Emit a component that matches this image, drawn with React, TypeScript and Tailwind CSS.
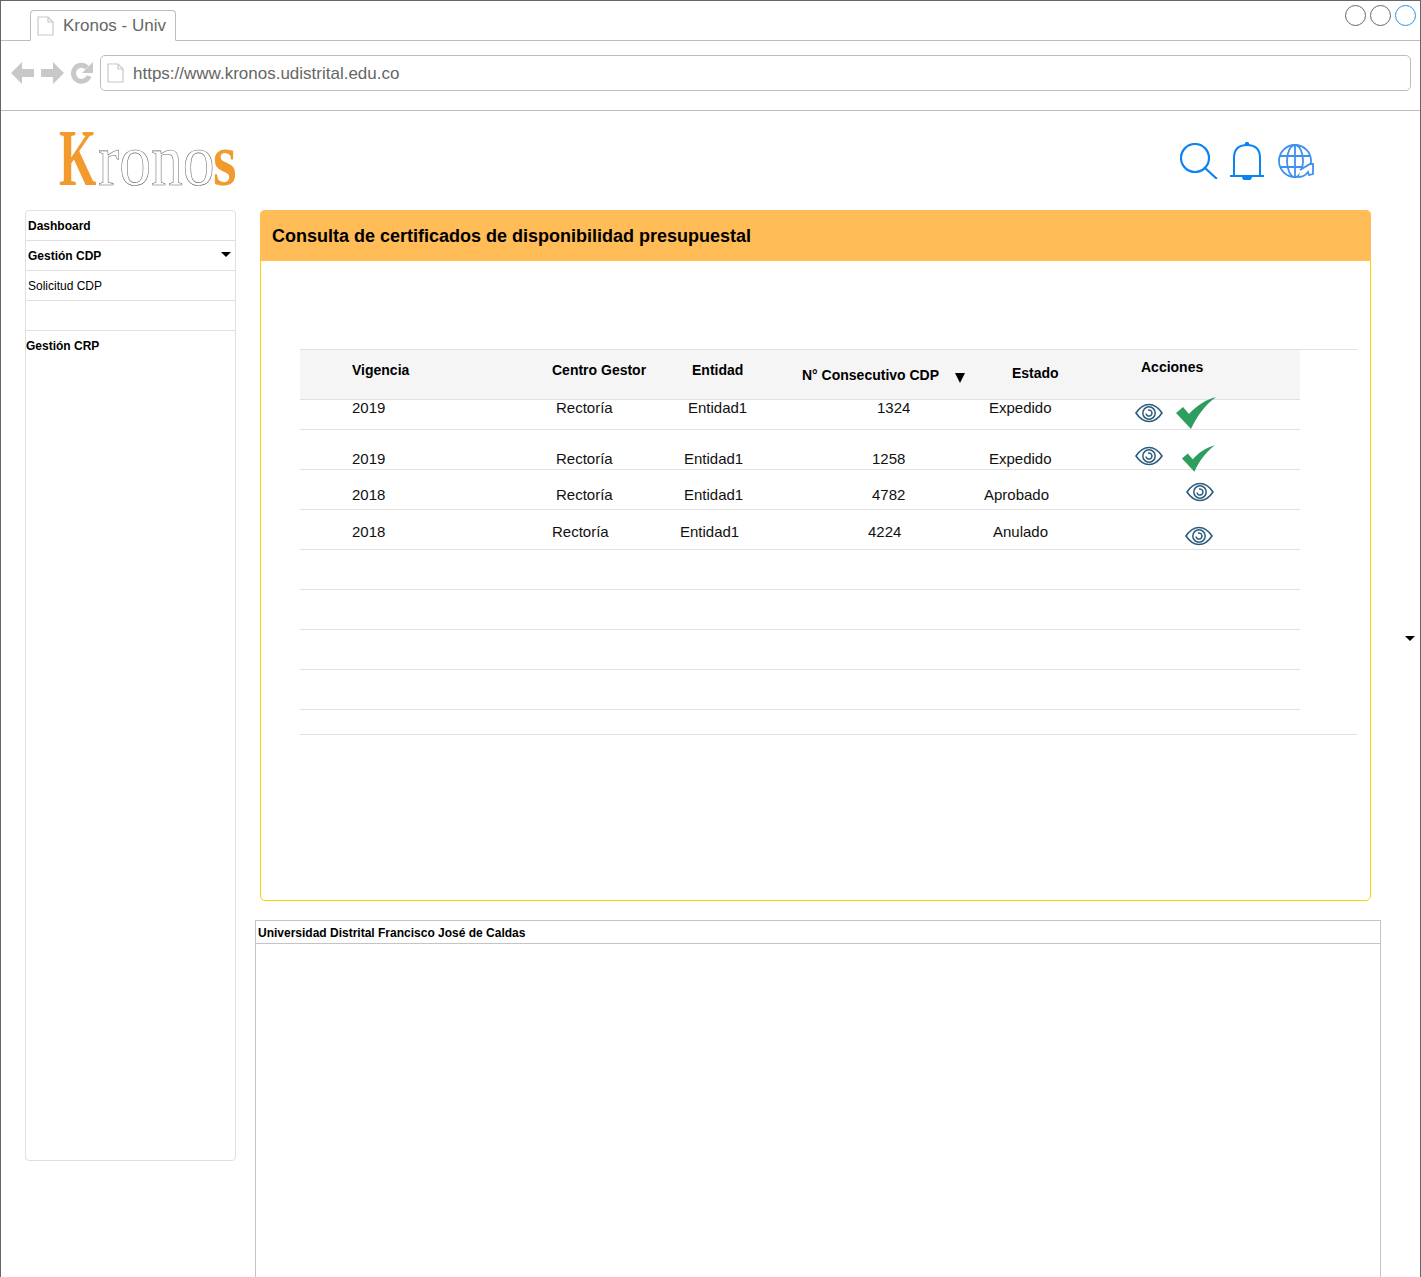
import type { ReactNode } from 'react'

const sans = "font-['Liberation_Sans',Arial,sans-serif]"

function PageIcon({ className }: { className: string }) {
  return (
    <svg viewBox="0 0 17 20" className={className} fill="#fff" stroke="#c8c8c8" strokeWidth="1.2">
      <path d="M1 1h10l5 5v13H1z" />
      <path d="M11 1v5h5" fill="none" />
    </svg>
  )
}

function Eye({ className }: { className: string }) {
  return (
    <svg viewBox="0 0 28 20" className={className} fill="none" stroke="#2b5b7e">
      <path d="M1 10C5 4 9 1.500 14 1.500S23 4 27 10c-4 6-8 8.500-13 8.500S5 16 1 10z" strokeWidth="1.600" />
      <circle cx="14" cy="10" r="6.200" strokeWidth="1.500" />
      <path d="M11 10.500a3 3 0 1 0 2-3.300" strokeWidth="1.500" />
    </svg>
  )
}

function Check({ className }: { className: string }) {
  return (
    <svg viewBox="0 0 40 32" className={className} fill="#2e9e5f">
      <path d="M0 16l7-6 6 7C20 9 29 3 40 0 29 8 21 19 15 32z" />
    </svg>
  )
}

function Caret({ className }: { className: string }) {
  return <div className={`h-0 w-0 border-x-[5px] border-t-[5px] border-x-transparent border-t-black ${className}`} />
}

function Row({ className, children }: { className: string; children: ReactNode }) {
  return <div className={`flex w-[1000px] items-start border-b border-[#e0e0e0] text-[15px] leading-5 text-[#111] ${className}`}>{children}</div>
}

function Cell({ className, children }: { className: string; children: ReactNode }) {
  return <span className={`shrink-0 ${className}`}>{children}</span>
}

function BrowserChrome() {
  return (
    <>
      <div className="flex h-10 items-end justify-between border-b border-[#bdbdbd] pl-[29px] pr-1">
        <div className="-mb-px flex h-[31px] w-[146px] items-center rounded-t-[4px] border border-b-white border-[#bdbdbd] bg-white pl-[6px]">
          <PageIcon className="h-[20px] w-[17px]" />
          <span className="ml-[9px] text-[17px] text-[#666]">Kronos - Univ</span>
        </div>
        <div className="mb-[14px] flex gap-[4px]">
          <div className="h-[21px] w-[21px] rounded-full border border-[#666]" />
          <div className="h-[21px] w-[21px] rounded-full border border-[#666]" />
          <div className="h-[21px] w-[21px] rounded-full border border-[#2196f3]" />
        </div>
      </div>
      <div className="flex h-[70px] items-center border-b border-[#bdbdbd] pb-[6px] pl-[10px] pr-[9px]">
        <svg viewBox="0 0 84 24" className="h-6 w-[84px] shrink-0" fill="#c8c8c8">
          <path d="M0 12L11 1v7h12v8H11v7z" />
          <path d="M53 12L42 1v7H30v8h12v7z" />
          <path d="M76 6.500A8 8 0 1 0 78 15" fill="none" stroke="#c8c8c8" strokeWidth="5" />
          <path d="M82 1v11H71z" />
        </svg>
        <div className="ml-[5px] flex h-[36px] flex-1 items-center rounded-[5px] border border-[#bdbdbd] pl-[6px]">
          <PageIcon className="h-[20px] w-[17px]" />
          <span className="ml-[9px] pt-[2px] text-[17px] text-[#666]">https://www.kronos.udistrital.edu.co</span>
        </div>
      </div>
    </>
  )
}

function TopBar() {
  return (
    <div className="flex h-[99px] items-start">
      <div className="ml-[58px] mt-[5px] flex w-[177px] shrink-0 items-baseline font-['Liberation_Serif',serif] leading-[84px]">
        <span className="inline-block w-[39px] shrink-0 origin-left scale-x-[0.6] text-[80px] font-bold text-[#f29a2e]">K</span>
        <span className="inline-block w-[115px] shrink-0 origin-left scale-x-[0.86] text-[74px] text-white [-webkit-text-stroke:0.6px_#6f6a60]">rono</span>
        <span className="inline-block w-[23px] shrink-0 origin-left scale-x-[0.82] text-[74px] font-bold text-[#f29a2e]">s</span>
      </div>
      <div className="ml-[944px] mt-[31px] flex items-center">
        <svg viewBox="0 0 38 36" className="h-[36px] w-[38px]" fill="none" stroke="#0a84f0" strokeWidth="2.200">
          <circle cx="15" cy="15" r="14" />
          <path d="M25 25l12 11" />
        </svg>
        <svg viewBox="0 0 36 38" className="ml-[11px] h-[38px] w-[36px]" fill="none" stroke="#0a84f0" strokeWidth="2">
          <path d="M5 34V16C5 7 10 3 18 3s13 4 13 13v18" />
          <path d="M1 34h34" />
          <path d="M14 35a4 3 0 0 0 8 0z" fill="#0a84f0" />
          <circle cx="18" cy="2" r="1.200" fill="#0a84f0" />
        </svg>
        <svg viewBox="0 0 36 36" className="ml-[13px] h-[36px] w-[36px]" fill="none" stroke="#3f8ff0" strokeWidth="1.800">
          <circle cx="17" cy="18" r="16" />
          <ellipse cx="17" cy="18" rx="8" ry="16" />
          <path d="M17 2v32M2 13h30M2 24h22" />
          <path d="M22 27l10-6 3 0v10l-4 1-1-3c-3 4-6 5-9 5" fill="#fff" />
        </svg>
      </div>
    </div>
  )
}

function Sidebar() {
  return (
    <aside className="ml-[24px] h-[951px] w-[211px] shrink-0 rounded-[4px] border border-[#e0e0e0] text-[12px] leading-none text-black">
      <div className="flex h-[30px] items-center border-b border-[#e0e0e0] pl-[2px] font-bold">Dashboard</div>
      <div className="flex h-[30px] items-center justify-between border-b border-[#e0e0e0] pl-[2px] pr-[4px] font-bold">
        Gestión CDP
        <Caret className="-mt-[3px]" />
      </div>
      <div className="flex h-[30px] items-center border-b border-[#e0e0e0] pl-[2px]">Solicitud CDP</div>
      <div className="h-[30px] border-b border-[#e0e0e0]" />
      <div className="pt-[9px] font-bold">Gestión CRP</div>
    </aside>
  )
}

function CdpTable() {
  return (
    <div className="ml-[39px] mt-[88px] w-[1057px] border-y border-[#e0e0e0] pb-[24px]">
      <div className="flex h-[50px] w-[1000px] items-start border-b border-[#e0e0e0] bg-[#f5f5f5] text-sm font-bold text-black">
        <Cell className="ml-[52px] mt-[10px] w-[200px]">Vigencia</Cell>
        <Cell className="mt-[10px] w-[140px]">Centro Gestor</Cell>
        <Cell className="mt-[10px] w-[110px]">Entidad</Cell>
        <Cell className="mt-[15px] w-[153px]">N° Consecutivo CDP</Cell>
        <svg viewBox="0 0 10 10" className="mt-[23px] h-[10px] w-[10px] shrink-0" fill="#000">
          <path d="M0 0h10L5 10z" />
        </svg>
        <Cell className="ml-[47px] mt-[13px] w-[129px]">Estado</Cell>
        <Cell className="mt-[7px]">Acciones</Cell>
      </div>
      <Row className="h-[30px]">
        <Cell className="-mt-[2px] ml-[52px] w-[204px]">2019</Cell>
        <Cell className="-mt-[2px] w-[132px]">Rectoría</Cell>
        <Cell className="-mt-[2px] w-[189px]">Entidad1</Cell>
        <Cell className="-mt-[2px] w-[112px]">1324</Cell>
        <Cell className="-mt-[2px] w-[146px]">Expedido</Cell>
        <Eye className="mt-[3px] h-[20px] w-[28px] shrink-0" />
        <Check className="z-10 -mt-[3px] ml-[13px] h-[32px] w-[40px] shrink-0" />
      </Row>
      <Row className="h-[40px]">
        <Cell className="ml-[52px] mt-[19px] w-[204px]">2019</Cell>
        <Cell className="mt-[19px] w-[128px]">Rectoría</Cell>
        <Cell className="mt-[19px] w-[188px]">Entidad1</Cell>
        <Cell className="mt-[19px] w-[117px]">1258</Cell>
        <Cell className="mt-[19px] w-[146px]">Expedido</Cell>
        <Eye className="mt-[16px] h-[20px] w-[28px] shrink-0" />
        <Check className="mt-[15px] ml-[19px] h-[27px] w-[33px] shrink-0" />
      </Row>
      <Row className="h-[40px]">
        <Cell className="ml-[52px] mt-[15px] w-[204px]">2018</Cell>
        <Cell className="mt-[15px] w-[128px]">Rectoría</Cell>
        <Cell className="mt-[15px] w-[188px]">Entidad1</Cell>
        <Cell className="mt-[15px] w-[112px]">4782</Cell>
        <Cell className="mt-[15px] w-[202px]">Aprobado</Cell>
        <Eye className="mt-[12px] h-[20px] w-[28px] shrink-0" />
      </Row>
      <Row className="h-[40px]">
        <Cell className="ml-[52px] mt-[12px] w-[200px]">2018</Cell>
        <Cell className="mt-[12px] w-[128px]">Rectoría</Cell>
        <Cell className="mt-[12px] w-[188px]">Entidad1</Cell>
        <Cell className="mt-[12px] w-[125px]">4224</Cell>
        <Cell className="mt-[12px] w-[192px]">Anulado</Cell>
        <Eye className="mt-[16px] h-[20px] w-[28px] shrink-0" />
      </Row>
      <Row className="h-[40px]"><span /></Row>
      <Row className="h-[40px]"><span /></Row>
      <Row className="h-[40px]"><span /></Row>
      <Row className="h-[40px]"><span /></Row>
    </div>
  )
}

export default function App() {
  return (
    <div className={`relative h-[1277px] w-[1421px] overflow-hidden border border-b-0 border-[#666] bg-white ${sans}`}>
      <BrowserChrome />
      <TopBar />
      <div className="flex">
        <Sidebar />
        <main className="ml-[19px] w-[1126px] flex-none">
          <section className="ml-[5px] h-[691px] w-[1111px] rounded-[5px] border border-[#ffd000]">
            <div className="-mx-px -mt-px flex h-[51px] items-center rounded-t-[5px] bg-[#ffbc57] pl-[12px] text-lg font-bold text-black">
              Consulta de certificados de disponibilidad presupuestal
            </div>
            <CdpTable />
          </section>
          <section className="mt-[19px] h-[357px] border border-b-0 border-[#c4c4c4]">
            <div className="flex h-[23px] items-center border-b border-[#c4c4c4] pl-[2px] pt-[2px] text-[12px] font-bold text-black">
              Universidad Distrital Francisco José de Caldas
            </div>
          </section>
        </main>
      </div>
      <Caret className="absolute right-[5px] top-[635px]" />
    </div>
  )
}
